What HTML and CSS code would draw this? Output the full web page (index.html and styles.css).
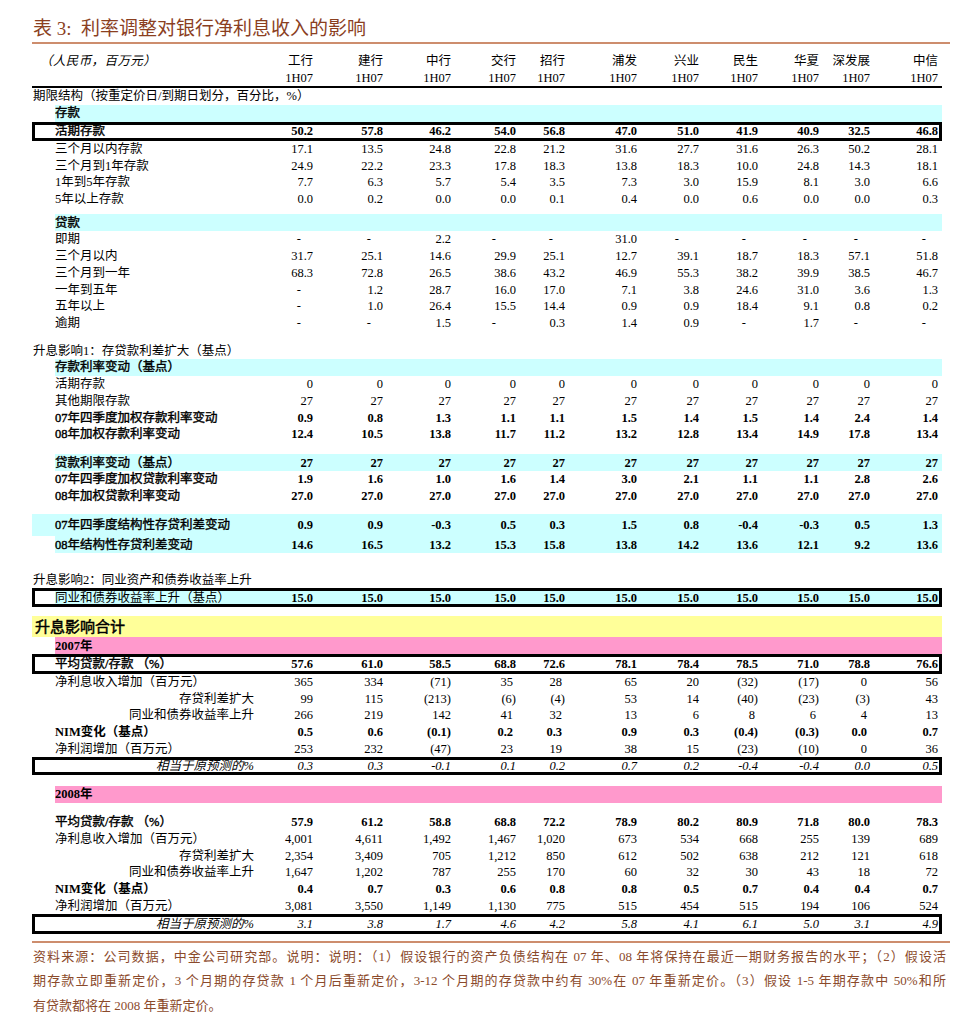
FILE: index.html
```html
<!DOCTYPE html>
<html lang="zh-CN">
<head>
<meta charset="utf-8">
<title>表3 利率调整对银行净利息收入的影响</title>
<link rel="stylesheet" href="styles.css">
</head>
<body>
<div class="title">表 3:&nbsp;&nbsp;利率调整对银行净利息收入的影响</div>

<div class="tbl">
  <div class="head">
    <div class="row hrow">
      <div class="unit">（人民币，百万元）</div>
      <div>工行</div><div>建行</div><div>中行</div><div>交行</div><div>招行</div><div>浦发</div><div>兴业</div><div>民生</div><div>华夏</div><div>深发展</div><div>中信</div>
    </div>
    <div class="row hrow">
      <div class="lab"></div>
      <div>1H07</div><div>1H07</div><div>1H07</div><div>1H07</div><div>1H07</div><div>1H07</div><div>1H07</div><div>1H07</div><div>1H07</div><div>1H07</div><div>1H07</div>
    </div>
  </div>

  <div class="row"><div class="sec">期限结构（按重定价日/到期日划分，百分比，%）</div></div>
  <div class="row band"><div class="lab bl">存款</div></div>
  <div class="row box b"><div class="lab bl">活期存款</div><div>50.2</div><div>57.8</div><div>46.2</div><div>54.0</div><div>56.8</div><div>47.0</div><div>51.0</div><div>41.9</div><div>40.9</div><div>32.5</div><div>46.8</div></div>
  <div class="row"><div class="lab">三个月以内存款</div><div>17.1</div><div>13.5</div><div>24.8</div><div>22.8</div><div>21.2</div><div>31.6</div><div>27.7</div><div>31.6</div><div>26.3</div><div>50.2</div><div>28.1</div></div>
  <div class="row"><div class="lab">三个月到1年存款</div><div>24.9</div><div>22.2</div><div>23.3</div><div>17.8</div><div>18.3</div><div>13.8</div><div>18.3</div><div>10.0</div><div>24.8</div><div>14.3</div><div>18.1</div></div>
  <div class="row"><div class="lab">1年到5年存款</div><div>7.7</div><div>6.3</div><div>5.7</div><div>5.4</div><div>3.5</div><div>7.3</div><div>3.0</div><div>15.9</div><div>8.1</div><div>3.0</div><div>6.6</div></div>
  <div class="row"><div class="lab">5年以上存款</div><div>0.0</div><div>0.2</div><div>0.0</div><div>0.0</div><div>0.1</div><div>0.4</div><div>0.0</div><div>0.6</div><div>0.0</div><div>0.0</div><div>0.3</div></div>
  <div class="gap g1"></div>
  <div class="row band"><div class="lab bl">贷款</div></div>
  <div class="row"><div class="lab">即期</div><div class="d">-</div><div class="d">-</div><div>2.2</div><div class="d wd">-</div><div class="d">-</div><div>31.0</div><div class="d wd">-</div><div class="d">-</div><div class="d">-</div><div class="d">-</div><div class="d">-</div></div>
  <div class="row"><div class="lab">三个月以内</div><div>31.7</div><div>25.1</div><div>14.6</div><div>29.9</div><div>25.1</div><div>12.7</div><div>39.1</div><div>18.7</div><div>18.3</div><div>57.1</div><div>51.8</div></div>
  <div class="row"><div class="lab">三个月到一年</div><div>68.3</div><div>72.8</div><div>26.5</div><div>38.6</div><div>43.2</div><div>46.9</div><div>55.3</div><div>38.2</div><div>39.9</div><div>38.5</div><div>46.7</div></div>
  <div class="row"><div class="lab">一年到五年</div><div class="d">-</div><div>1.2</div><div>28.7</div><div>16.0</div><div>17.0</div><div>7.1</div><div>3.8</div><div>24.6</div><div>31.0</div><div>3.6</div><div>1.3</div></div>
  <div class="row"><div class="lab">五年以上</div><div class="d">-</div><div>1.0</div><div>26.4</div><div>15.5</div><div>14.4</div><div>0.9</div><div>0.9</div><div>18.4</div><div>9.1</div><div>0.8</div><div>0.2</div></div>
  <div class="row"><div class="lab">逾期</div><div class="d">-</div><div class="d">-</div><div>1.5</div><div class="d wd">-</div><div>0.3</div><div>1.4</div><div>0.9</div><div class="d">-</div><div>1.7</div><div class="d">-</div><div class="d">-</div></div>
  <div class="gap g2"></div>

  <div class="row"><div class="sec">升息影响1：存贷款利差扩大（基点）</div></div>
  <div class="row band"><div class="lab bl">存款利率变动（基点）</div></div>
  <div class="row"><div class="lab">活期存款</div><div>0</div><div>0</div><div>0</div><div>0</div><div>0</div><div>0</div><div>0</div><div>0</div><div>0</div><div>0</div><div>0</div></div>
  <div class="row"><div class="lab">其他期限存款</div><div>27</div><div>27</div><div>27</div><div>27</div><div>27</div><div>27</div><div>27</div><div>27</div><div>27</div><div>27</div><div>27</div></div>
  <div class="row b"><div class="lab bl">07年四季度加权存款利率变动</div><div>0.9</div><div>0.8</div><div>1.3</div><div>1.1</div><div>1.1</div><div>1.5</div><div>1.4</div><div>1.5</div><div>1.4</div><div>2.4</div><div>1.4</div></div>
  <div class="row b"><div class="lab bl">08年加权存款利率变动</div><div>12.4</div><div>10.5</div><div>13.8</div><div>11.7</div><div>11.2</div><div>13.2</div><div>12.8</div><div>13.4</div><div>14.9</div><div>17.8</div><div>13.4</div></div>
  <div class="gap g3"></div>
  <div class="row band b"><div class="lab bl">贷款利率变动（基点）</div><div>27</div><div>27</div><div>27</div><div>27</div><div>27</div><div>27</div><div>27</div><div>27</div><div>27</div><div>27</div><div>27</div></div>
  <div class="row b"><div class="lab bl">07年四季度加权贷款利率变动</div><div>1.9</div><div>1.6</div><div>1.0</div><div>1.6</div><div>1.4</div><div>3.0</div><div>2.1</div><div>1.1</div><div>1.1</div><div>2.8</div><div>2.6</div></div>
  <div class="row b"><div class="lab bl">08年加权贷款利率变动</div><div>27.0</div><div>27.0</div><div>27.0</div><div>27.0</div><div>27.0</div><div>27.0</div><div>27.0</div><div>27.0</div><div>27.0</div><div>27.0</div><div>27.0</div></div>
  <div class="gap g4"></div>
  <div class="row cyanfull tall b"><div class="lab bl">07年四季度结构性存贷利差变动</div><div>0.9</div><div>0.9</div><div>-0.3</div><div>0.5</div><div>0.3</div><div>1.5</div><div>0.8</div><div>-0.4</div><div>-0.3</div><div>0.5</div><div>1.3</div></div>
  <div class="row band b"><div class="lab bl">08年结构性存贷利差变动</div><div>14.6</div><div>16.5</div><div>13.2</div><div>15.3</div><div>15.8</div><div>13.8</div><div>14.2</div><div>13.6</div><div>12.1</div><div>9.2</div><div>13.6</div></div>
  <div class="gap g5"></div>

  <div class="row"><div class="sec">升息影响2：同业资产和债券收益率上升</div></div>
  <div class="row band box b"><div class="lab">同业和债券收益率上升（基点）</div><div>15.0</div><div>15.0</div><div>15.0</div><div>15.0</div><div>15.0</div><div>15.0</div><div>15.0</div><div>15.0</div><div>15.0</div><div>15.0</div><div>15.0</div></div>
  <div class="gap g6"></div>

  <div class="row yellow"><div class="sec big">升息影响合计</div></div>
  <div class="row pink"><div class="lab yr">2007年</div></div>
  <div class="row box b boxtall"><div class="lab bl">平均贷款/存款 （%）</div><div>57.6</div><div>61.0</div><div>58.5</div><div>68.8</div><div>72.6</div><div>78.1</div><div>78.4</div><div>78.5</div><div>71.0</div><div>78.8</div><div>76.6</div></div>
  <div class="row"><div class="lab">净利息收入增加（百万元）</div><div>365</div><div>334</div><div>(71)</div><div class="p">35</div><div class="p">28</div><div>65</div><div>20</div><div>(32)</div><div>(17)</div><div class="p">0</div><div>56</div></div>
  <div class="row"><div class="lab r">存贷利差扩大</div><div>99</div><div>115</div><div>(213)</div><div>(6)</div><div>(4)</div><div>53</div><div>14</div><div>(40)</div><div>(23)</div><div>(3)</div><div>43</div></div>
  <div class="row"><div class="lab r">同业和债券收益率上升</div><div>266</div><div>219</div><div>142</div><div class="p">41</div><div class="p">32</div><div>13</div><div>6</div><div class="p">8</div><div class="p">6</div><div class="p">4</div><div>13</div></div>
  <div class="row b"><div class="lab yr">NIM变化（基点）</div><div>0.5</div><div>0.6</div><div>(0.1)</div><div class="p">0.2</div><div class="p">0.3</div><div>0.9</div><div>0.3</div><div>(0.4)</div><div>(0.3)</div><div class="p">0.0</div><div>0.7</div></div>
  <div class="row"><div class="lab">净利润增加（百万元）</div><div>253</div><div>232</div><div>(47)</div><div class="p">23</div><div class="p">19</div><div>38</div><div>15</div><div>(23)</div><div>(10)</div><div class="p">0</div><div>36</div></div>
  <div class="row box i boxmid"><div class="lab r">相当于原预测的%</div><div>0.3</div><div>0.3</div><div>-0.1</div><div>0.1</div><div>0.2</div><div>0.7</div><div>0.2</div><div>-0.4</div><div>-0.4</div><div>0.0</div><div>0.5</div></div>
  <div class="gap g7"></div>
  <div class="row pink"><div class="lab yr">2008年</div></div>
  <div class="gap g8"></div>
  <div class="row b"><div class="lab bl">平均贷款/存款 （%）</div><div>57.9</div><div>61.2</div><div>58.8</div><div>68.8</div><div>72.2</div><div>78.9</div><div>80.2</div><div>80.9</div><div>71.8</div><div>80.0</div><div>78.3</div></div>
  <div class="row"><div class="lab">净利息收入增加（百万元）</div><div>4,001</div><div>4,611</div><div>1,492</div><div>1,467</div><div>1,020</div><div>673</div><div>534</div><div>668</div><div>255</div><div>139</div><div>689</div></div>
  <div class="row"><div class="lab r">存贷利差扩大</div><div>2,354</div><div>3,409</div><div>705</div><div>1,212</div><div>850</div><div>612</div><div>502</div><div>638</div><div>212</div><div>121</div><div>618</div></div>
  <div class="row"><div class="lab r">同业和债券收益率上升</div><div>1,647</div><div>1,202</div><div>787</div><div>255</div><div>170</div><div>60</div><div>32</div><div>30</div><div>43</div><div>18</div><div>72</div></div>
  <div class="row b"><div class="lab yr">NIM变化（基点）</div><div>0.4</div><div>0.7</div><div>0.3</div><div>0.6</div><div>0.8</div><div>0.8</div><div>0.5</div><div>0.7</div><div>0.4</div><div>0.4</div><div>0.7</div></div>
  <div class="row"><div class="lab">净利润增加（百万元）</div><div>3,081</div><div>3,550</div><div>1,149</div><div>1,130</div><div>775</div><div>515</div><div>454</div><div>515</div><div>194</div><div>106</div><div>524</div></div>
  <div class="row box i boxtall"><div class="lab r">相当于原预测的%</div><div>3.1</div><div>3.8</div><div>1.7</div><div>4.6</div><div>4.2</div><div>5.8</div><div>4.1</div><div>6.1</div><div>5.0</div><div>3.1</div><div>4.9</div></div>
</div>

<div class="endline"></div>
<div class="foot">
  <div class="j">资料来源：公司数据，中金公司研究部。说明：说明：（1）假设银行的资产负债结构在 07 年、08 年将保持在最近一期财务报告的水平；（2）假设活</div>
  <div class="j">期存款立即重新定价，3 个月期的存贷款 1 个月后重新定价，3-12 个月期的存贷款中约有 30%在 07 年重新定价。（3）假设 1-5 年期存款中 50%和所</div>
  <div>有贷款都将在 2008 年重新定价。</div>
</div>
</body>
</html>
```

FILE: styles.css
```css
* {
  box-sizing: border-box;
  margin: 0;
  padding: 0;
}

body {
  width: 973px;
  background: #ffffff;
  color: #000000;
  font-family: "Liberation Serif", "Noto Sans CJK SC", serif;
}

.title {
  margin-left: 32px;
  width: 918px;
  height: 44px;
  padding-top: 16px;
  padding-left: 1px;
  line-height: 26px;
  font-size: 19px;
  color: #8b3f1f;
  border-bottom: 2px solid #cd8d6d;
  white-space: nowrap;
}

.tbl {
  margin-left: 32px;
  width: 910px;
  font-size: 12.5px;
}

.head {
  margin-top: 8.5px;
  border-bottom: 2px solid #000000;
}

.row {
  display: grid;
  grid-template-columns: 23px 203px 55px 70px 68px 65px 49px 72px 62px 59px 61px 51px 68px;
  padding-right: 4px;
  height: 16.75px;
  line-height: 16px;
  align-items: center;
  white-space: nowrap;
}

.row > div {
  text-align: right;
}

.row > .lab {
  grid-column: 2;
  text-align: left;
}

.row > .lab.r {
  text-align: right;
  padding-right: 4px;
}

.row > .sec {
  grid-column: 1 / -1;
  text-align: left;
  padding-left: 1px;
}

.row > .unit {
  grid-column: 1 / 3;
  text-align: left;
  padding-left: 8px;
  font-style: italic;
  letter-spacing: 0.4px;
}

.b > div:not(.lab) {
  font-weight: bold;
}

.lab.bl {
  -webkit-text-stroke: 0.4px currentColor;
}

.lab.yr {
  font-weight: bold;
}

.i > div {
  font-style: italic;
}

.row > .d {
  padding-right: 12px;
}

.row > .d.wd {
  padding-right: 20px;
}

.row > .p {
  padding-right: 3px;
}

.band {
  background: linear-gradient(to right, transparent 23px, #ccffff 23px);
}

.cyanfull {
  background: #ccffff;
}

.tall {
  height: 22px;
}

.box {
  height: 19px;
  box-shadow: inset 0 0 0 3px #000000;
}

.boxtall {
  height: 19.5px;
}

.boxmid {
  height: 18px;
}

.yellow {
  background: #ffff99;
  height: 21px;
}

.sec.big {
  font-size: 15px;
  padding-left: 3px;
  -webkit-text-stroke: 0.5px currentColor;
}

.pink {
  background: linear-gradient(to right, transparent 23px, #ff99cc 23px);
}

.gap {
  height: 10px;
}

.g1 { height: 6.75px; }
.g2 { height: 10.75px; }
.g3 { height: 11.5px; }
.g4 { height: 9.75px; }
.g5 { height: 18.25px; }
.g6 { height: 9.25px; }
.g7 { height: 10.5px; }
.g8 { height: 11.25px; }

.endline {
  margin-left: 32px;
  margin-top: 7px;
  width: 918px;
  border-top: 2px solid #cd8d6d;
}

.foot {
  margin-left: 33px;
  width: 913px;
  padding-top: 2px;
  font-size: 13px;
  line-height: 24.5px;
  color: #8b4a2b;
}

.foot .j {
  text-align: justify;
  text-align-last: justify;
  white-space: nowrap;
}
```
